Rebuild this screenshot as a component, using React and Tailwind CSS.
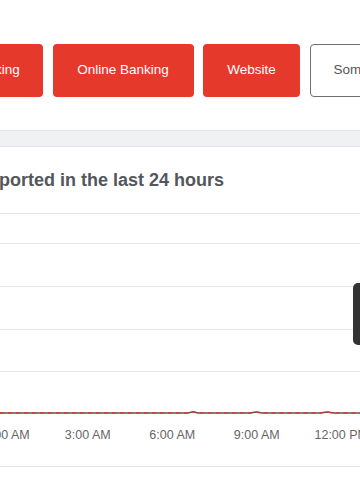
export default function App() {
  const buttons = [
    { label: 'Mobile Banking', width: 'w-[139px]', active: true },
    { label: 'Online Banking', width: 'w-[141px]', active: true },
    { label: 'Website', width: 'w-[97px]', active: true },
    { label: 'Something else', width: 'w-[141px]', active: false },
  ];

  const ticks = ['12:00 AM', '3:00 AM', '6:00 AM', '9:00 AM', '12:00 PM', '3:00 PM'];

  return (
    <div className="w-[360px] h-[504px] overflow-hidden bg-white font-['Liberation_Sans',Arial,sans-serif]">
      {/* problem type buttons */}
      <div className="flex gap-[9.5px] pt-[44px] ml-[-96px] w-max">
        {buttons.map((b) => (
          <button
            key={b.label}
            className={
              b.active
                ? `${b.width} h-[53px] rounded-[4px] bg-[#e5392b] text-white text-[13.5px] whitespace-nowrap`
                : `${b.width} h-[53px] rounded-[4px] bg-white border border-[#6f6f6f] text-[#555] text-[13.5px] whitespace-nowrap`
            }
          >
            {b.label}
          </button>
        ))}
      </div>

      <div className="mt-[33px] h-[17px] bg-[#eff1f3] border-y border-[#e2e4e7]" />

      <div className="h-[66px] flex items-center">
        <h2 className="ml-[-95px] whitespace-nowrap text-[18px] font-bold text-[#53575c]">
          Outages reported in the last 24 hours
        </h2>
      </div>

      {/* chart */}
      <div className="relative h-[254px] border-y border-[#e6e6e6]">
        <div className="pt-[29px]">
          <div className="h-[43px] border-t border-[#e8e8e8]" />
          <div className="h-[43px] border-t border-[#e8e8e8]" />
          <div className="h-[42px] border-t border-[#e8e8e8]" />
          <div className="h-[37px] border-t border-[#e8e8e8]" />
        </div>
        <svg width="360" height="10" viewBox="0 0 360 10" className="block">
          <polyline
            points="0,5 188,5 193,3.8 198,5 250,5 256,4 262,5 320,5 327,4 334,5 360,5"
            fill="none"
            stroke="#555"
            strokeWidth="1.5"
          />
          <polyline
            points="0,5 188,5 193,3.8 198,5 250,5 256,4 262,5 320,5 327,4 334,5 360,5"
            fill="none"
            stroke="#e5392b"
            strokeWidth="1.5"
            strokeDasharray="4 4"
          />
        </svg>
        <div className="flex ml-[-39px] mt-[8px] w-max">
          {ticks.map((t) => (
            <div key={t} className="w-[84.5px] text-center text-[12.5px] text-[#666] whitespace-nowrap">
              {t}
            </div>
          ))}
        </div>
        <div className="absolute left-[353px] top-[69px] w-[24px] h-[62px] rounded-[5px] bg-[#333]" />
      </div>
    </div>
  );
}
